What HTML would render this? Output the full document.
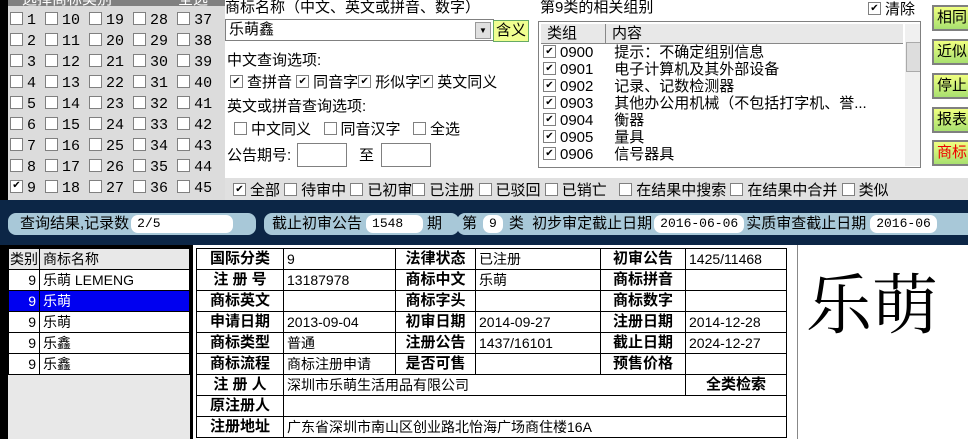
<html><head><style>
body{margin:0;width:968px;height:439px;background:#000;position:relative;overflow:hidden;font-family:"Liberation Sans","Noto Sans CJK SC",sans-serif;font-size:14px;color:#000}
.a{position:absolute;white-space:nowrap}
.cb{display:inline-block;width:11px;height:11px;border:1px solid #808080;background:#fff;vertical-align:-1px;margin-right:4px;font-size:10px;line-height:11px;text-align:center;overflow:hidden}
.pill{position:absolute;top:213px;height:22px;background:#a8c8d8;border-radius:8px;line-height:22px;font-size:15px;white-space:nowrap;overflow:hidden}
.wv{display:inline-block;background:#fff;border-radius:7px;padding:0 6px;line-height:18px;height:18px;font-family:"Liberation Mono",monospace;font-size:13px;vertical-align:middle}
table{border-collapse:collapse}
td{border:1px solid #000;height:20px;line-height:18px;padding:0 3px;font-size:14px;white-space:nowrap;overflow:hidden}
tr{height:21px}
td.l{font-weight:bold;text-align:center;font-size:15px}
.btn{position:absolute;left:932px;width:40px;height:22px;background:linear-gradient(#f0ff80,#a8e070);border:2px solid #808080;font-size:15px;line-height:22px;padding-left:3px}
.rows div{height:21px;line-height:21px}
</style></head><body>
<div class="a" style="left:8px;top:0;width:217px;height:200px;background:#dcdcdc"></div>
<div class="a" style="left:8px;top:0;width:217px;height:6px;background:#808080;overflow:hidden"><span style="position:absolute;left:14px;top:-12px;color:#fff;font-size:15px">选择商标类别</span><span style="position:absolute;left:170px;top:-12px;color:#fff;font-size:15px">全选</span></div>
<div class="a" style="left:225px;top:0;width:743px;height:178px;background:#fff"></div>
<div class="a" style="left:225px;top:178px;width:743px;height:22px;background:#e0e0e0"></div>
<div class="a" style="left:0;top:200px;width:968px;height:45px;background:#0c2646"></div>

<div class="a rows" style="left:10px;top:10px;font-size:15px;font-family:'Liberation Mono',monospace">
<div><span class="cb"></span>1 <span class="cb"></span>10 <span class="cb"></span>19 <span class="cb"></span>28 <span class="cb"></span>37</div>
<div><span class="cb"></span>2 <span class="cb"></span>11 <span class="cb"></span>20 <span class="cb"></span>29 <span class="cb"></span>38</div>
<div><span class="cb"></span>3 <span class="cb"></span>12 <span class="cb"></span>21 <span class="cb"></span>30 <span class="cb"></span>39</div>
<div><span class="cb"></span>4 <span class="cb"></span>13 <span class="cb"></span>22 <span class="cb"></span>31 <span class="cb"></span>40</div>
<div><span class="cb"></span>5 <span class="cb"></span>14 <span class="cb"></span>23 <span class="cb"></span>32 <span class="cb"></span>41</div>
<div><span class="cb"></span>6 <span class="cb"></span>15 <span class="cb"></span>24 <span class="cb"></span>33 <span class="cb"></span>42</div>
<div><span class="cb"></span>7 <span class="cb"></span>16 <span class="cb"></span>25 <span class="cb"></span>34 <span class="cb"></span>43</div>
<div><span class="cb"></span>8 <span class="cb"></span>17 <span class="cb"></span>26 <span class="cb"></span>35 <span class="cb"></span>44</div>
<div><span class="cb">✔</span>9 <span class="cb"></span>18 <span class="cb"></span>27 <span class="cb"></span>36 <span class="cb"></span>45</div>
</div>

<div class="a" style="left:225px;top:-4px;font-size:15px">商标名称（中文、英文或拼音、数字）</div>
<div class="a" style="left:225px;top:19px;width:264px;height:20px;border:1px solid #808080;background:#fff;font-size:15px;line-height:20px;padding-left:3px">乐萌鑫<span style="position:absolute;right:2px;top:2px;width:14px;height:15px;background:#e0e0e0;border:1px solid #999;font-size:8px;line-height:15px;text-align:center">▼</span></div>
<div class="a" style="left:493px;top:20px;width:34px;height:20px;background:#f0ff90;border:1px solid #6a6;font-size:15px;text-align:center;line-height:20px">含义</div>
<div class="a" style="left:227px;top:49px;font-size:15px">中文查询选项:</div>
<div class="a" style="left:230px;top:71px;font-size:15px"><span class="cb">✔</span>查拼音 <span class="cb">✔</span>同音字<span class="cb">✔</span>形似字<span class="cb">✔</span>英文同义</div>
<div class="a" style="left:227px;top:95px;font-size:15px">英文或拼音查询选项:</div>
<div class="a" style="left:234px;top:118px;font-size:15px"><span class="cb"></span>中文同义 &nbsp;&nbsp;<span class="cb"></span>同音汉字 &nbsp;&nbsp;<span class="cb"></span>全选</div>
<div class="a" style="left:227px;top:144px;font-size:15px">公告期号:</div>
<div class="a" style="left:297px;top:143px;width:48px;height:22px;border:1px solid #808080;background:#fff"></div>
<div class="a" style="left:359px;top:144px;font-size:15px">至</div>
<div class="a" style="left:381px;top:143px;width:48px;height:22px;border:1px solid #808080;background:#fff"></div>

<div class="a" style="left:540px;top:-4px;font-size:15px">第9类的相关组别</div>
<div class="a" style="left:868px;top:-2px;font-size:15px"><span class="cb">✔</span>清除</div>
<div class="a" style="left:538px;top:21px;width:381px;height:145px;border:1px solid #808080;background:#fff;overflow:hidden">
 <div style="position:absolute;left:2px;top:2px;width:362px;height:19px;background:#e8e8e8;border-bottom:1px solid #888;font-size:15px;line-height:19px"><span style="padding-left:6px">类组</span><span style="position:absolute;left:64px;border-left:1px solid #888;padding-left:6px">内容</span></div>
 <div style="position:absolute;right:0;top:2px;width:15px;height:142px;background:#f0f0f0"><div style="position:absolute;top:18px;left:1px;width:13px;height:28px;background:#ddd;border:1px solid #aaa"></div></div>
 <div style="position:absolute;left:4px;top:22px;font-size:15px;line-height:17px">
 <div><span class="cb">✔</span>0900&nbsp;&nbsp;&nbsp;&nbsp;&nbsp;提示：不确定组别信息</div>
 <div><span class="cb">✔</span>0901&nbsp;&nbsp;&nbsp;&nbsp;&nbsp;电子计算机及其外部设备</div>
 <div><span class="cb">✔</span>0902&nbsp;&nbsp;&nbsp;&nbsp;&nbsp;记录、记数检测器</div>
 <div><span class="cb">✔</span>0903&nbsp;&nbsp;&nbsp;&nbsp;&nbsp;其他办公用机械（不包括打字机、誉...</div>
 <div><span class="cb">✔</span>0904&nbsp;&nbsp;&nbsp;&nbsp;&nbsp;衡器</div>
 <div><span class="cb">✔</span>0905&nbsp;&nbsp;&nbsp;&nbsp;&nbsp;量具</div>
 <div><span class="cb">✔</span>0906&nbsp;&nbsp;&nbsp;&nbsp;&nbsp;信号器具</div>
 </div>
</div>
<div class="btn" style="top:5px">相同</div>
<div class="btn" style="top:39px">近似</div>
<div class="btn" style="top:73px">停止</div>
<div class="btn" style="top:107px">报表</div>
<div class="btn" style="top:140px;color:#e00">商标</div>

<div class="a" style="left:233px;top:179px;font-size:15px"><span class="cb">✔</span>全部 <span class="cb"></span>待审中 <span class="cb"></span>已初审<span class="cb"></span>已注册 <span class="cb"></span>已驳回 <span class="cb"></span>已销亡 &nbsp;&nbsp;<span class="cb"></span>在结果中搜索 <span class="cb"></span>在结果中合并 <span class="cb"></span>类似</div>

<div class="pill" style="left:8px;width:236px;padding-left:12px">查询结果,记录数<span class="wv" style="width:90px;margin-left:2px">2/5</span></div>
<div class="pill" style="left:264px;width:187px;padding-left:8px">截止初审公告<span class="wv" style="width:45px;margin:0 4px">1548</span>期</div>
<div class="pill" style="left:457px;width:520px;padding-left:5px">第<span class="wv" style="margin:0 6px">9</span>类 &nbsp;初步审定截止日期<span class="wv" style="margin:0 2px">2016-06-06</span>实质审查截止日期<span class="wv" style="margin-left:4px">2016-06</span></div>

<div class="a" style="left:8px;top:248px;width:182px;height:191px;background:#e8e8e8"></div>
<table class="a" style="left:8px;top:248px;width:182px;background:#fff">
<tr><td style="width:24px;padding:0 1px;background:#e8e8e8">类别</td><td style="background:#e8e8e8">商标名称</td></tr>
<tr><td style="text-align:right">9</td><td>乐萌 LEMENG</td></tr>
<tr style="background:#0000f0;color:#fff"><td style="text-align:right">9</td><td>乐萌</td></tr>
<tr><td style="text-align:right">9</td><td>乐萌</td></tr>
<tr><td style="text-align:right">9</td><td>乐鑫</td></tr>
<tr><td style="text-align:right">9</td><td>乐鑫</td></tr>
</table>

<div class="a" style="left:193px;top:245px;width:605px;height:194px;background:#fff"></div>
<table class="a" style="left:196px;top:248px;width:590px;table-layout:fixed">
<col style="width:87px"><col style="width:112px"><col style="width:80px"><col style="width:125px"><col style="width:85px"><col style="width:101px">
<tr><td class="l">国际分类</td><td>9</td><td class="l">法律状态</td><td>已注册</td><td class="l">初审公告</td><td>1425/11468</td></tr>
<tr><td class="l">注 册 号</td><td>13187978</td><td class="l">商标中文</td><td>乐萌</td><td class="l">商标拼音</td><td></td></tr>
<tr><td class="l">商标英文</td><td></td><td class="l">商标字头</td><td></td><td class="l">商标数字</td><td></td></tr>
<tr><td class="l">申请日期</td><td>2013-09-04</td><td class="l">初审日期</td><td>2014-09-27</td><td class="l">注册日期</td><td>2014-12-28</td></tr>
<tr><td class="l">商标类型</td><td>普通</td><td class="l">注册公告</td><td>1437/16101</td><td class="l">截止日期</td><td>2024-12-27</td></tr>
<tr><td class="l">商标流程</td><td>商标注册申请</td><td class="l">是否可售</td><td></td><td class="l">预售价格</td><td></td></tr>
<tr><td class="l">注 册 人</td><td colspan="4">深圳市乐萌生活用品有限公司</td><td class="l">全类检索</td></tr>
<tr><td class="l">原注册人</td><td colspan="5"></td></tr>
<tr><td class="l">注册地址</td><td colspan="5">广东省深圳市南山区创业路北怡海广场商住楼16A</td></tr>
</table>
<div class="a" style="left:797px;top:245px;width:171px;height:194px;background:#fff;border-left:1px solid #888"></div>
<div class="a" style="left:806px;top:252px;font-size:66px;font-family:'Noto Serif CJK SC','Noto Sans CJK SC',serif">乐萌</div>
</body></html>
